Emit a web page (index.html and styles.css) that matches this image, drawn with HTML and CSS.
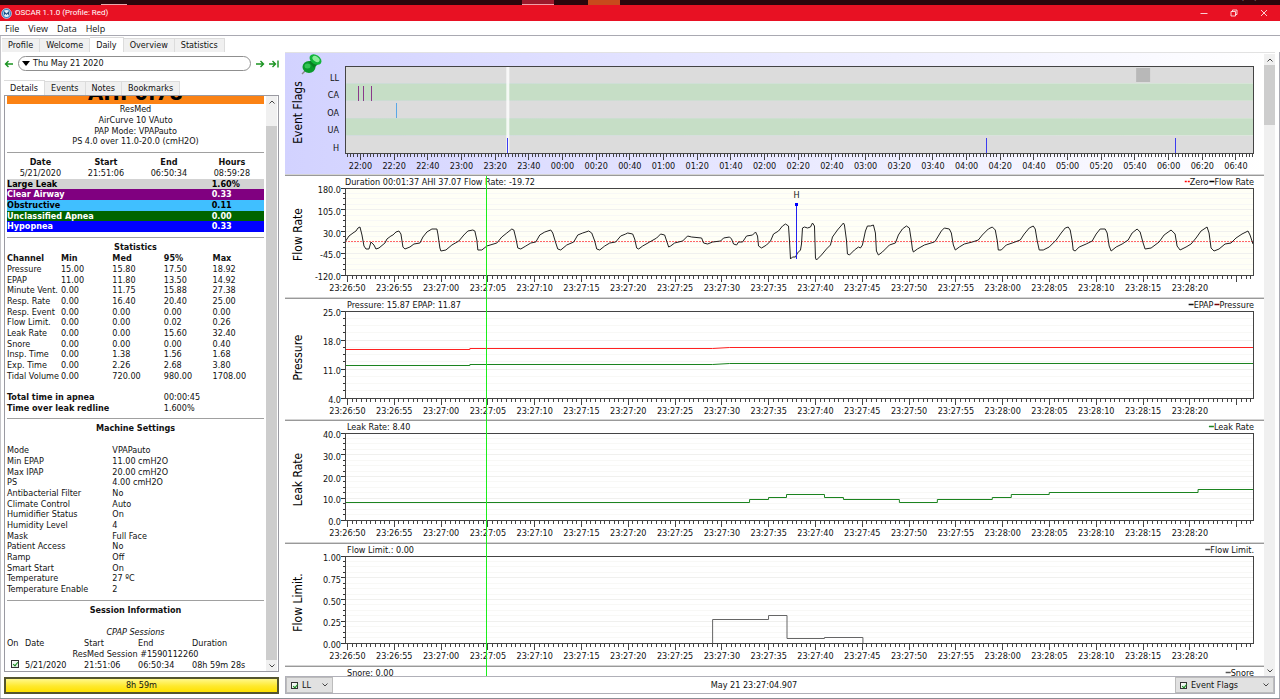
FILE: index.html
```
<!DOCTYPE html>
<html lang="en">
<head>
<meta charset="utf-8">
<title>OSCAR 1.1.0 (Profile: Red)</title>
<link rel="stylesheet" href="styles.css">
</head>
<body>
<div class="desktop">
  <span class="task task-pale"></span>
  <span class="task task-red"></span>
  <span class="task task-orange"></span>
  <span class="clock">5/22/2020</span>
</div>
<header class="titlebar">
  <svg class="logo" viewBox="0 0 12 12" aria-hidden="true">
    <circle cx="6" cy="6" r="5.4" fill="#2e7fc0" stroke="#cfe6f7" stroke-width=".8"/>
    <circle cx="6" cy="6" r="3.7" fill="#e8f2fa"/>
    <path d="M3.6 7.8V4.4L6 6.8 8.4 4.4v3.4" fill="none" stroke="#1c4f86" stroke-width="1.1"/>
  </svg>
  <h1 class="title">OSCAR 1.1.0 (Profile: Red)</h1>
  <div class="controls">
    <button class="control" aria-label="Minimize"><svg viewBox="0 0 8 8"><path d="M.5 4.5h7"/></svg></button>
    <button class="control" aria-label="Restore"><svg viewBox="0 0 8 8"><path d="M1 2.5h4.5V7H1zM2.5 2.5V1H7v4.5H5.5"/></svg></button>
    <button class="control" aria-label="Close"><svg viewBox="0 0 8 8"><path d="M1 1l6 6M7 1L1 7"/></svg></button>
  </div>
</header>
<nav class="menubar">
  <button>File</button><button>View</button><button>Data</button><button>Help</button>
</nav>
<div class="tabs main-tabs" role="tablist">
  <button role="tab">Profile</button><button role="tab">Welcome</button><button role="tab" class="active" aria-selected="true">Daily</button><button role="tab">Overview</button><button role="tab">Statistics</button>
</div>
<main class="workspace">
  <aside class="side">
    <div class="datebar">
      <button class="arrow" aria-label="Previous day"><svg viewBox="0 0 10 8"><path d="M9 4H2M4.500 1L1.500 4l3 3"/></svg></button>
      <button class="date"><svg viewBox="0 0 8 5" aria-hidden="true"><path d="M0 0h8L4 5z"/></svg>Thu May 21 2020</button>
      <button class="arrow" aria-label="Next day"><svg viewBox="0 0 10 8"><path d="M1 4h7M5.500 1l3 3-3 3"/></svg></button>
      <button class="arrow" aria-label="Latest day"><svg viewBox="0 0 10 8"><path d="M0 4h6M3.500 1l3 3-3 3M9 .5v7"/></svg></button>
    </div>
    <div class="tabs detail-tabs" role="tablist">
      <button role="tab" class="active" aria-selected="true">Details</button><button role="tab">Events</button><button role="tab">Notes</button><button role="tab">Bookmarks</button>
    </div>
    <section class="details">
      <div class="report">
        <div class="ahi"><span>AHI 0.78</span></div>
        <ul class="machine"><li>ResMed</li><li>AirCurve 10 VAuto</li><li>PAP Mode: VPAPauto</li><li>PS 4.0 over 11.0-20.0 (cmH2O)</li></ul>
        <hr>
        <table class="summary">
          <colgroup><col class="w26"><col class="w25"><col class="w24"><col class="w25"></colgroup>
          <tr><th>Date</th><th>Start</th><th>End</th><th>Hours</th></tr>
          <tr><td>5/21/2020</td><td>21:51:06</td><td>06:50:34</td><td>08:59:28</td></tr>
          <tr class="band leak"><th colspan="3">Large Leak</th><td>1.60%</td></tr>
          <tr class="band clear"><th colspan="3">Clear Airway</th><td>0.33</td></tr>
          <tr class="band obstructive"><th colspan="3">Obstructive</th><td>0.11</td></tr>
          <tr class="band unclassified"><th colspan="3">Unclassified Apnea</th><td>0.00</td></tr>
          <tr class="band hypopnea"><th colspan="3">Hypopnea</th><td>0.33</td></tr>
        </table>
        <hr>
        <h2>Statistics</h2>
        <table class="list">
          <colgroup><col class="w21"><col class="w20"><col class="w20"><col class="w19"><col class="w20"></colgroup>
          <tr><th>Channel</th><th>Min</th><th>Med</th><th>95%</th><th>Max</th></tr>
          <tr><td>Pressure</td><td>15.00</td><td>15.80</td><td>17.50</td><td>18.92</td></tr>
          <tr><td>EPAP</td><td>11.00</td><td>11.80</td><td>13.50</td><td>14.92</td></tr>
          <tr><td>Minute Vent.</td><td>0.00</td><td>11.75</td><td>15.88</td><td>27.38</td></tr>
          <tr><td>Resp. Rate</td><td>0.00</td><td>16.40</td><td>20.40</td><td>25.00</td></tr>
          <tr><td>Resp. Event</td><td>0.00</td><td>0.00</td><td>0.00</td><td>0.00</td></tr>
          <tr><td>Flow Limit.</td><td>0.00</td><td>0.00</td><td>0.02</td><td>0.26</td></tr>
          <tr><td>Leak Rate</td><td>0.00</td><td>0.00</td><td>15.60</td><td>32.40</td></tr>
          <tr><td>Snore</td><td>0.00</td><td>0.00</td><td>0.00</td><td>0.40</td></tr>
          <tr><td>Insp. Time</td><td>0.00</td><td>1.38</td><td>1.56</td><td>1.68</td></tr>
          <tr><td>Exp. Time</td><td>0.00</td><td>2.26</td><td>2.68</td><td>3.80</td></tr>
          <tr><td>Tidal Volume</td><td>0.00</td><td>720.00</td><td>980.00</td><td>1708.00</td></tr>
          <tr><td colspan="5">&nbsp;</td></tr>
          <tr><th colspan="3">Total time in apnea</th><td colspan="2">00:00:45</td></tr>
          <tr><th colspan="3">Time over leak redline</th><td colspan="2">1.600%</td></tr>
        </table>
        <hr>
        <h2 class="spaced">Machine Settings</h2>
        <table class="list">
          <colgroup><col class="w41"><col></colgroup>
          <tr><td>Mode</td><td>VPAPauto</td></tr>
          <tr><td>Min EPAP</td><td>11.00 cmH2O</td></tr>
          <tr><td>Max IPAP</td><td>20.00 cmH2O</td></tr>
          <tr><td>PS</td><td>4.00 cmH2O</td></tr>
          <tr><td>Antibacterial Filter</td><td>No</td></tr>
          <tr><td>Climate Control</td><td>Auto</td></tr>
          <tr><td>Humidifier Status</td><td>On</td></tr>
          <tr><td>Humidity Level</td><td>4</td></tr>
          <tr><td>Mask</td><td>Full Face</td></tr>
          <tr><td>Patient Access</td><td>No</td></tr>
          <tr><td>Ramp</td><td>Off</td></tr>
          <tr><td>Smart Start</td><td>On</td></tr>
          <tr><td>Temperature</td><td>27 ºC</td></tr>
          <tr><td>Temperature Enable</td><td>2</td></tr>
        </table>
        <hr>
        <h2 class="spaced">Session Information</h2>
        <table class="list sessions">
          <caption>CPAP Sessions</caption>
          <colgroup><col class="w7"><col class="w23"><col class="w21"><col class="w21"><col></colgroup>
          <tr><td>On</td><td>Date</td><td>Start</td><td>End</td><td>Duration</td></tr>
          <tr><td colspan="5" class="center">ResMed Session #1590112260</td></tr>
          <tr><td><input type="checkbox" class="check" checked aria-label="Session 1590112260"></td><td>5/21/2020</td><td>21:51:06</td><td>06:50:34</td><td>08h 59m 28s</td></tr>
        </table>
      </div>
      <div class="scroll side-scroll">
        <button aria-label="Scroll up"><svg viewBox="0 0 6 4"><path d="M.5 3.500L3 1l2.500 2.500"/></svg></button>
        <span class="thumb"></span>
        <button aria-label="Scroll down"><svg viewBox="0 0 6 4"><path d="M.5.5L3 3 5.500.5"/></svg></button>
      </div>
    </section>
    <button class="duration">8h 59m</button>
  </aside>
  <section class="graphs">
    <div class="graph-view">
      <div class="graph-list" id="graphs"></div>
      <div class="scroll graph-scroll">
        <button aria-label="Scroll up"><svg viewBox="0 0 6 4"><path d="M.5 3.500L3 1l2.500 2.500"/></svg></button>
        <span class="thumb"></span>
        <button aria-label="Scroll down"><svg viewBox="0 0 6 4"><path d="M.5.5L3 3 5.500.5"/></svg></button>
      </div>
    </div>
    <footer class="footer">
      <button class="drop flags"><span class="check on"></span><span class="drop-text">LL</span><svg viewBox="0 0 6 4"><path d="M.5.5L3 3 5.500.5"/></svg></button>
      <output class="moment">May 21 23:27:04.907</output>
      <button class="drop chooser"><span class="check on"></span><span class="drop-text">Event Flags</span><svg viewBox="0 0 6 4"><path d="M.5.5L3 3 5.500.5"/></svg></button>
    </footer>
  </section>
</main>
<script src="graphs.js"></script>
</body>
</html>
```
FILE: styles.css
```
* { box-sizing: border-box; }
html, body { height: 100%; }
body {
  margin: 0;
  display: flex;
  flex-direction: column;
  overflow: hidden;
  background: #fff;
  color: #111;
  font: 9px/11px "DejaVu Sans Condensed", "DejaVu Sans", "Noto Sans", sans-serif;
  border-bottom: 1px solid #8c8c94;
}
button { font: inherit; color: inherit; background: none; border: 0; padding: 0; margin: 0; }
svg { display: block; }

.desktop { position: relative; flex: none; height: 5px; background: #2b060c; overflow: hidden; }
.task { position: absolute; top: 0; height: 5px; }
.task-pale { left: 101px; width: 26px; top: 4px; height: 1px; background: #e9a7ab; }
.task-red { left: 522px; width: 32px; background: #9c1a2c; border-bottom: 1px solid #f0a0a8; }
.task-orange { left: 588px; width: 32px; background: #c84a1c; }
.clock { position: absolute; right: 4px; bottom: 2px; color: #eee; font-family: Roboto, sans-serif; font-size: 8px; }

.titlebar { flex: none; height: 16px; display: flex; align-items: center; padding: 0 1px; gap: 3px; background: #e81123; color: #fff; font-family: Roboto, sans-serif; font-size: 8px; }
.logo { width: 11px; height: 11px; }
.title { flex: 1; margin: 0; font: inherit; line-height: 16px; }
.controls { display: flex; }
.control { width: 30px; height: 16px; display: grid; place-items: center; }
.control svg { width: 8px; height: 8px; fill: none; stroke: #fff; stroke-width: .8; }

.menubar { flex: none; height: 15px; display: flex; align-items: center; gap: 9px; padding: 0 5px; border-bottom: 1px solid #a9a9b2; font-family: "Open Sans", sans-serif; }
.tabs { flex: none; display: flex; align-items: flex-end; }
.tabs button { height: 14px; padding: 0 6px; line-height: 13px; background: #f0f0f0; border: 1px solid #dcdcdc; border-left: 0; border-bottom: 0; }
.tabs .active { height: 15px; background: #fff; }
.main-tabs { height: 16px; padding: 0 1px; border-left: 1px solid #c4c4c8; }

.workspace { flex: 1; min-height: 0; display: flex; gap: 6px; padding: 0 4px 4px 3px; border-left: 1px solid #c4c4c8; border-right: 1px solid #a9a9b2; }
.side { flex: none; width: 275px; display: flex; flex-direction: column; }
.datebar { flex: none; height: 27px; display: flex; align-items: center; gap: 4px; padding-bottom: 4px; }
.arrow svg { width: 10px; height: 8px; fill: none; stroke: #1b9422; stroke-width: 1.400; }
.date { flex: 1; height: 15px; display: flex; align-items: center; gap: 3px; padding: 0 3px; border: 1px solid #8f8f8f; border-radius: 8px; }
.date svg { width: 8px; height: 5px; }
.detail-tabs { height: 16px; }
.details { flex: 1; min-height: 0; display: flex; border: 1px solid #9a9aa2; overflow: hidden; }
.report { flex: 1; min-width: 0; padding: 0 2px; }
.ahi { height: 8px; display: flex; justify-content: center; align-items: flex-end; overflow: hidden; background: #fb8214; color: #000; font-size: 22px; font-weight: bold; line-height: 22px; }
.machine { margin: 0; padding: 0; list-style: none; text-align: center; }
.machine li:nth-child(3n) { line-height: 10px; }
hr { height: 10px; margin: 0; border: 0; background: linear-gradient(#a0a0a0, #a0a0a0) center / 100% 1px no-repeat; }
h2 { margin: 0; font-size: 9px; line-height: 11px; text-align: center; }
.spaced { padding-bottom: 11px; }
table { width: 100%; table-layout: fixed; border-collapse: collapse; }
td, th { padding: 0; line-height: 11px; text-align: left; white-space: nowrap; }
tr:nth-child(3n) > * { line-height: 10px; }
.summary td, .summary th, .center { text-align: center; }
.summary .band th { text-align: left; }
.summary .band td { text-align: left; padding-left: 12px; font-weight: bold; }
.leak { background: #d3d3d3; color: #000; }
.clear { background: #800080; color: #fff; }
.obstructive { background: #40bfff; color: #000; }
.unclassified { background: #006400; color: #fff; }
.hypopnea { background: #0000ff; color: #fff; }
caption { font-style: italic; line-height: 11px; }
.w7 { width: 7%; } .w19 { width: 19%; } .w20 { width: 20%; } .w21 { width: 21%; }
.w23 { width: 23%; } .w24 { width: 24%; } .w25 { width: 25%; } .w26 { width: 26%; } .w41 { width: 41%; }
.check { appearance: none; display: inline-block; width: 8px; height: 8px; margin: 0 0 0 4px; border: 1px solid #333; background: #fff linear-gradient(135deg, #fff, #d8ecd8); position: relative; vertical-align: top; }
.check::after { content: ""; position: absolute; left: 2px; top: 0; width: 2px; height: 4px; border: solid #16881e; border-width: 0 1px 1px 0; transform: rotate(40deg); }

.scroll { flex: none; display: flex; flex-direction: column; background: #f0f0f0; }
.scroll button { flex: none; height: 11px; display: grid; place-items: center; }
.scroll svg, .drop svg { width: 6px; height: 4px; fill: none; stroke: #444; stroke-width: 1; }
.thumb { background: #cdcdcd; }
.side-scroll { width: 11px; margin-right: 1px; }
.side-scroll .thumb { flex: 1; margin-top: 19px; }
.duration { flex: none; height: 17px; margin-top: 5px; border: 2px solid #55552e; background: linear-gradient(#fff88a, #ffe92c 55%, #ffe100); }

.graphs { flex: 1; min-width: 0; display: flex; flex-direction: column; }
.graph-view { flex: 1; min-height: 0; display: flex; border-top: 1px solid #e2e2e2; overflow: hidden; }
.graph-list { flex: 1; min-width: 0; }
.graph { height: 123px; border-bottom: 1px solid #999; box-shadow: inset 0 -1px #d4d4d4; position: relative; }
.graph:nth-child(3) { height: 122px; }
.graph > svg { width: 100%; height: 123px; overflow: visible; }
.flags-graph { background: linear-gradient(to right, #d2d2ff, #fff); }
.graph text { font-size: 9px; fill: #111; }
.graph .name { font-size: 12px; fill: #000; }
.graph-scroll { width: 11px; border-top: 1px solid #fff; }
.graph-scroll .thumb { height: 60px; margin-bottom: auto; }
.graph > .pin { position: absolute; left: 16px; top: 1px; width: 22px; height: 22px; }

.footer { flex: none; height: 18px; display: flex; align-items: center; border: 1px solid #b0b0b8; }
.moment { flex: 1; text-align: center; }
.drop { height: 16px; display: flex; align-items: center; gap: 4px; padding: 0 4px; background: #e1e1e1; border: 1px solid #bcbcbc; }
.drop-text { flex: 1; text-align: left; }
.drop .check { width: 7px; height: 7px; margin: 0; }
.flags { width: 47px; }
.chooser { width: 99px; }
```
FILE: graphs.js
```
const DESIGN_WIDTH = 910;
const LEFT = 60, RIGHT = 10, TOP = 12, HEIGHT = 87;
const CURSOR = 141.5;

const flowRate = "0,54 4,48 8,45 11,43 13,40 15,39 17,47 19,58 21,61 24,61 26,54 29,57 31,61 34,60 40,55 42,51 46,48 48,47 51,44 54,43 56,46 58,59 60,61 65,59 69,56 75,55 78,49 82,44 87,41 92,41 93,46 95,60 96,63 101,62 107,57 114,53 119,47 123,43 128,42 130,43 132,52 133,62 137,62 142,58 152,55 157,49 162,45 167,41 169,42 171,50 173,60 176,61 181,58 186,55 191,54 195,47 200,44 206,42 208,45 211,55 213,61 216,62 222,57 229,54 233,47 238,45 244,43 247,45 250,53 252,61 255,62 260,58 265,55 271,54 276,48 281,46 283,45 288,46 290,51 292,60 294,61 298,58 305,54 312,50 316,46 320,47 322,53 324,59 326,58 330,55 338,53 343,48 347,49 357,50 359,55 363,56 368,54 376,53 379,50 385,49 387,51 389,56 392,57 394,54 398,54 402,48 408,47 411,44 413,48 414,58 417,60 422,57 426,53 429,46 434,43 438,38 441,36 444,38 445,53 446,71 448,69 451,69 453,65 456,62 457,56 458,40 460,39 463,40 466,39 468,35 470,38 471,70 472,72 477,67 482,61 486,57 488,49 493,42 499,35 500,37 502,52 503,66 505,67 510,62 514,59 516,60 518,57 521,43 523,38 526,38 529,37 531,45 532,63 534,67 538,64 545,57 551,55 554,47 558,41 562,38 565,40 567,53 568,61 569,64 573,61 580,57 590,54 591,53 594,48 597,43 600,40 605,41 607,45 609,57 611,62 615,59 620,56 628,54 634,52 638,47 644,41 648,39 651,42 653,53 654,62 657,62 662,57 668,55 676,52 680,46 685,40 689,38 691,41 693,53 695,62 699,62 705,59 712,52 717,45 721,40 724,39 726,42 728,53 729,62 731,63 735,59 742,56 748,53 752,46 756,41 761,41 763,45 765,58 767,63 772,59 778,56 784,52 788,45 793,41 796,44 799,55 801,61 807,60 815,54 820,47 827,42 831,46 833,58 836,62 842,59 847,56 852,50 857,43 863,39 865,45 867,60 870,63 875,61 881,56 887,55 892,50 898,46 904,43 906,47 909,56";

const pinIcon = `<svg class="pin" viewBox="0 0 22 22" aria-hidden="true">
  <path d="M1 20l5-5" stroke="#888" stroke-width="1.500"/>
  <ellipse cx="8" cy="13" rx="6.500" ry="6" fill="#0a9a2c"/>
  <ellipse cx="6.500" cy="12" rx="3" ry="2.500" fill="#35c455"/>
  <path d="M8 8l5-4 5 5-5 5z" fill="#087f24"/>
  <ellipse cx="14.500" cy="5.500" rx="6.500" ry="4.500" transform="rotate(35 14.500 5.500)" fill="#12b53a"/>
  <ellipse cx="15" cy="5" rx="4" ry="2.500" transform="rotate(35 15 5)" fill="#8cec9c"/>
</svg>`;

const pad = n => String(n).padStart(2, "0");
const seconds = Array.from({ length: 19 }, (_, i) => {
  const t = 23 * 3600 + 26 * 60 + 50 + i * 5;
  return `${pad(Math.floor(t / 3600))}:${pad(Math.floor(t / 60) % 60)}:${pad(t % 60)}`;
});
const hours = Array.from({ length: 27 }, (_, i) => {
  const t = (22 * 60 + i * 20) % 1440;
  return `${pad(Math.floor(t / 60))}:${pad(t % 60)}`;
});
const fine = { start: 2.500, step: 46.850, labels: seconds };
const whole = { start: 15.500, step: 33.710, labels: hours };

const graphs = [
  { name: "Event Flags", axis: whole, flags: ["LL", "CA", "OA", "UA", "H"], top: 13 },
  { name: "Flow Rate", title: "Duration 00:01:37 AHI 37.07 Flow Rate: -19.72", titleX: 0, axis: fine,
    y: ["180.0", "105.0", "30.0", "-45.0", "-120.0"], fill: "#fffff6",
    legend: [["Zero", "#f00", "2 1"], ["Flow Rate", "#000"]],
    lines: [["0,53.5 910,53.5", "#f66", "2 1"], [flowRate, "#222"]], marker: { x: 451.5, from: 17, to: 71, text: "H" } },
  { name: "Pressure", title: "Pressure: 15.87 EPAP: 11.87", titleX: 2, axis: fine, y: ["25.0", "18.0", "11.0", "4.0"],
    legend: [["EPAP", "#111"], ["Pressure", "#700"]],
    lines: [["0,38.5 125,38.5 125,37.5 368,37.5 368,37.5 385,36.5 910,36.5", "#f22"], ["0,54.5 125,54.5 125,53.5 368,53.5 385,52.5 910,52.5", "#1c8420"]] },
  { name: "Leak Rate", title: "Leak Rate: 8.40", titleX: 2, axis: fine, y: ["40.0", "30.0", "20.0", "10.0", "0.0"],
    legend: [["Leak Rate", "#1c8420"]],
    lines: [["0,69.5 405,69.5 405,66.5 424,66.5 424,64.5 442,64.5 442,61.5 480,61.5 480,64.5 499,64.5 499,66.5 555,66.5 555,69.5 593,69.5 593,66.5 648,66.5 648,64.5 667,64.5 667,61.5 705,61.5 705,59.5 854,59.5 854,56.5 910,56.5", "#1c8420"]] },
  { name: "Flow Limit.", title: "Flow Limit.: 0.00", titleX: 2, axis: fine, y: ["1.00", "0.75", "0.50", "0.25", "0.00"],
    legend: [["Flow Limit.", "#555"]],
    lines: [["368,87 368,63.5 424,63.5 424,59.5 442.5,59.5 442.5,82.5 480,82.5 480,81.5 518.5,81.5 518.5,87", "#666"]] },
  { name: "Snore", title: "Snore: 0.00", titleX: 2, axis: fine, y: [], legend: [["Snore", "#555"]], lines: [] }
];

const line = (x1, y1, x2, y2, color, extra = "") =>
  `<line x1="${x1}" y1="${y1}" x2="${x2}" y2="${y2}" stroke="${color}" ${extra}/>`;
const text = (x, y, content, anchor, extra = "") =>
  `<text x="${x}" y="${y}" text-anchor="${anchor}" ${extra}>${content}</text>`;
const snap = v => Math.floor(v) + 0.5;

function drawGraph(graph, host) {
  const width = host.clientWidth - LEFT - RIGHT;
  const scale = width / DESIGN_WIDTH;
  const top = graph.top || TOP;
  const bottom = top + HEIGHT;
  const px = x => LEFT + x * scale;
  const right = LEFT + width;
  let out = "";

  if (graph.flags) {
    const row = HEIGHT / 5;
    graph.flags.forEach((flag, i) => {
      out += `<rect x="${LEFT}" y="${top + i * row}" width="${width}" height="${row}" fill="${i % 2 ? "#c6dec6" : "#dcdcdc"}"/>`;
      out += text(LEFT - 6, top + i * row + 15, flag, "end");
    });
    out += `<rect x="${px(792)}" y="${top + 2}" width="${14 * scale}" height="14" fill="#b8b8b8"/>`;
    [14, 19, 26.5].forEach(x => { out += line(snap(px(x)), top + 20, snap(px(x)), top + 35, "#8a3a8a"); });
    out += line(snap(px(51.5)), top + 37, snap(px(51.5)), top + 52, "#5aa8e6");
    out += `<rect x="${px(161.5)}" y="${top}" width="3" height="${HEIGHT}" fill="#fff" opacity=".8"/>`;
    [163, 642.5, 831.5].forEach(x => { out += line(snap(px(x)), top + 72, snap(px(x)), bottom, "#3c3cf0"); });
  } else {
    out += `<rect x="${LEFT}" y="${top}" width="${width}" height="${HEIGHT}" fill="${graph.fill || "#fff"}"/>`;
    const parts = Math.max(graph.y.length - 1, 1) * 4;
    for (let i = 1; i < parts; i++) {
      const y = snap(top + i * HEIGHT / parts);
      out += line(LEFT, y, right, y, i % 4 ? "#f8f8f6" : "#f0f0ee");
      out += line(LEFT - (i % 4 ? 2 : 4), y, LEFT, y, "#333");
    }
    graph.y.forEach((label, i) => {
      out += text(LEFT - 4, top + i * HEIGHT / (graph.y.length - 1) + 5, label, "end");
    });
    out += line(LEFT - 4, top + .5, LEFT, top + .5, "#333") + line(LEFT - 4, bottom + .5, LEFT, bottom + .5, "#333");
    graph.lines.forEach(([points, color, dash]) => {
      const scaled = points.split(" ").map(p => p.split(",").map(Number)).map(([x, y]) => `${px(x)},${top + y}`).join(" ");
      out += `<polyline points="${scaled}" fill="none" stroke="${color}" ${dash ? `stroke-dasharray="${dash}"` : ""}/>`;
    });
    if (graph.marker) {
      const m = graph.marker, x = snap(px(m.x));
      out += line(x, top + m.from, x, top + m.to, "#2222f0");
      out += `<rect x="${x - 1.5}" y="${top + m.from - 2}" width="3" height="3" fill="#00f"/>` + text(x, top + 10, m.text, "middle");
    }
    out += text(px(graph.titleX), 9, graph.title, "start");
  }
  out += `<rect x="${LEFT + .5}" y="${top + .5}" width="${width - 1}" height="${HEIGHT}" fill="none" stroke="#444"/>`;

  const minor = graph.axis.step / 10;
  for (let i = -4; graph.axis.start + i * minor < DESIGN_WIDTH; i++) {
    const x = graph.axis.start + i * minor;
    if (x < 0) continue;
    out += line(snap(px(x)), bottom, snap(px(x)), bottom + (i % 10 ? 4 : 7), "#444");
  }
  graph.axis.labels.forEach((label, i) => {
    out += text(px(graph.axis.start + i * graph.axis.step), bottom + 16, label, "middle");
  });
  const center = top + HEIGHT / 2 + (graph.flags ? 3 : 3);
  if (graph.y === undefined || graph.y.length) {
    out += text(0, 0, graph.name, "middle", `class="name" transform="translate(17 ${center}) rotate(-90)"`);
  }
  if (!graph.flags) out += line(snap(px(CURSOR)), 0, snap(px(CURSOR)), 123, "#1af01a");
  host.innerHTML = `<svg role="img" aria-label="${graph.name}">${out}</svg>` + (graph.flags ? pinIcon : "");

  const svg = host.firstChild;
  let x = right;
  (graph.legend || []).slice().reverse().forEach(([label, color, dash]) => {
    svg.insertAdjacentHTML("beforeend", text(x, 9, label, "end"));
    x -= svg.lastChild.getComputedTextLength();
    svg.insertAdjacentHTML("beforeend", line(x - 5, 5.5, x, 5.5, color, `stroke-width="1.500" ${dash ? `stroke-dasharray="${dash}"` : ""}`));
    x -= 6;
  });
}

const list = document.getElementById("graphs");
const hosts = graphs.map(graph => {
  const host = document.createElement("div");
  host.className = graph.flags ? "graph flags-graph" : "graph";
  list.append(host);
  return host;
});
const drawAll = () => graphs.forEach((graph, i) => drawGraph(graph, hosts[i]));
drawAll();
window.addEventListener("resize", drawAll);
```
